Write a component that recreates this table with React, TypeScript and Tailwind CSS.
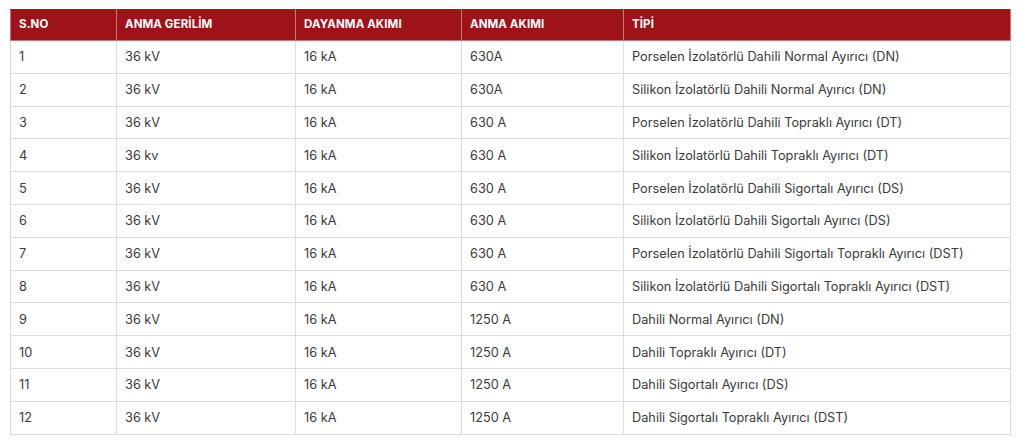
import React from "react";

const rows: [string, string, string, string, string][] = [
  ["1", "36 kV", "16 kA", "630A", "Porselen İzolatörlü Dahili Normal Ayırıcı (DN)"],
  ["2", "36 kV", "16 kA", "630A", "Silikon İzolatörlü Dahili Normal Ayırıcı (DN)"],
  ["3", "36 kV", "16 kA", "630 A", "Porselen İzolatörlü Dahili Topraklı Ayırıcı (DT)"],
  ["4", "36 kv", "16 kA", "630 A", "Silikon İzolatörlü Dahili Topraklı Ayırıcı (DT)"],
  ["5", "36 kV", "16 kA", "630 A", "Porselen İzolatörlü Dahili Sigortalı Ayırıcı (DS)"],
  ["6", "36 kV", "16 kA", "630 A", "Silikon İzolatörlü Dahili Sigortalı Ayırıcı (DS)"],
  ["7", "36 kV", "16 kA", "630 A", "Porselen İzolatörlü Dahili Sigortalı Topraklı Ayırıcı (DST)"],
  ["8", "36 kV", "16 kA", "630 A", "Silikon İzolatörlü Dahili Sigortalı Topraklı Ayırıcı (DST)"],
  ["9", "36 kV", "16 kA", "1250 A", "Dahili Normal Ayırıcı (DN)"],
  ["10", "36 kV", "16 kA", "1250 A", "Dahili Topraklı Ayırıcı (DT)"],
  ["11", "36 kV", "16 kA", "1250 A", "Dahili Sigortalı Ayırıcı (DS)"],
  ["12", "36 kV", "16 kA", "1250 A", "Dahili Sigortalı Topraklı Ayırıcı (DST)"],
];

const headers = ["S.NO", "ANMA GERİLİM", "DAYANMA AKIMI", "ANMA AKIMI", "TİPİ"];
const widths = ["w-[106px]", "w-[179px]", "w-[166px]", "w-[162px]", "w-[387px]"];

export default function App() {
  return (
    <div className="w-[1024px] h-[448px] bg-white pt-[9px] pl-[10px]" style={{ fontFamily: "Inter, 'Liberation Sans', sans-serif" }}>
      <table className="w-[1000px] border-collapse table-fixed">
        <colgroup>
          {widths.map((w, i) => (
            <col key={i} className={w} />
          ))}
        </colgroup>
        <thead>
          <tr className="h-[31px] bg-[#9e1318]">
            {headers.map((h) => (
              <th
                key={h}
                className="border border-[#c9777a] border-t-[#9e1318] text-left pl-[8px] text-[11.5px] font-bold text-white tracking-[0.1px] align-middle"
              >
                {h}
              </th>
            ))}
          </tr>
        </thead>
        <tbody>
          {rows.map((r) => (
            <tr key={r[0]} className="h-[32.8px]">
              {r.map((c, i) => (
                <td key={i} className="border border-[#dcdcdc] pl-[8px] text-[12.75px] text-[#3a3a3a] align-middle">
                  {c}
                </td>
              ))}
            </tr>
          ))}
        </tbody>
      </table>
    </div>
  );
}
